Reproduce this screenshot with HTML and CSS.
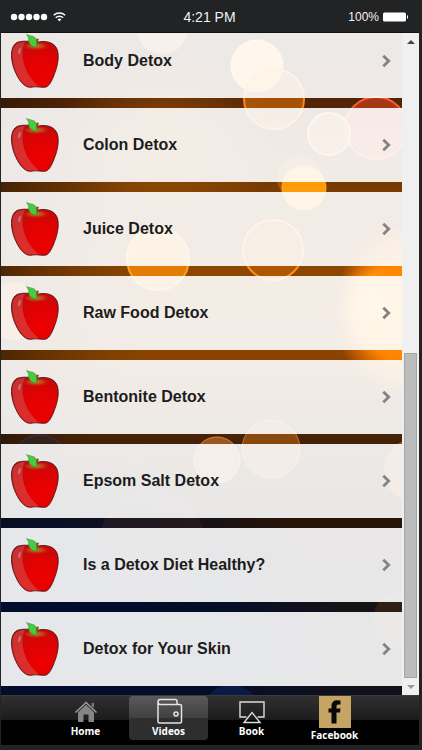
FILE: index.html
```html
<!DOCTYPE html>
<html lang="en">
<head>
    <meta charset="UTF-8">
    <meta name="viewport" content="width=device-width, initial-scale=1.0">
    <title>Detox Videos</title>
    <link rel="stylesheet" href="styles.css">
</head>
<body>
    <!-- shared icons -->
    <svg class="defs" width="0" height="0" aria-hidden="true">
        <defs>
            <radialGradient id="skin" cx="0.65" cy="0.7" r="0.75">
                <stop offset="0" stop-color="#ee0000"/>
                <stop offset="0.6" stop-color="#dc0303"/>
                <stop offset="1" stop-color="#b80c0c"/>
            </radialGradient>
            <radialGradient id="dimple">
                <stop offset="0" stop-color="#b9822c"/>
                <stop offset="0.5" stop-color="#c0501c" stop-opacity="0.8"/>
                <stop offset="1" stop-color="#d01008" stop-opacity="0"/>
            </radialGradient>
        </defs>
        <symbol id="apple" viewBox="0 0 48 54">
            <path d="M25 8.500C20 7 11 6.500 6 8.500C1.500 11 0 17 .6 24C1.200 31 3.500 37 6.500 42.500C9 47 13 52.500 18 53.200C21 53.500 22 52.800 25 52.800C28 52.800 31 53.700 34.500 53.200C39 52.300 42 44 44 38.500C46.500 32 48 24 46.800 18C45.500 9 36 5.500 25 8.500Z" fill="url(#skin)" stroke="#4a0a0a" stroke-width=".8"/>
            <path d="M14 8C10.500 14 11 25 14 33C17 41.500 22 48 28 52.300C24 52 21 53 18 52.500C13.500 51.700 9.500 46.500 7 42C3.500 36 1.700 29 1.300 22C1 14 4 8 14 8Z" fill="#d86464" opacity=".45"/>
            <ellipse cx="25" cy="12" rx="14" ry="4.500" fill="url(#dimple)"/>
            <ellipse cx="8.500" cy="17" rx="1" ry="3.200" fill="#f4a0a0" opacity=".6" transform="rotate(12 8 17)"/>
            <path d="M24 12C24 8 25 6 25.800 4.500L28 5C26.800 7.500 26.300 9 26 12Z" fill="#8a4a18"/>
            <path d="M15.500 .5C18.500 2.200 23.500 1.500 25 5C26.200 8 25 10 26 13.200C21.500 12.700 18 10.500 17.800 7C17.800 4.500 17.200 2.500 15.500 .5Z" fill="#45cc40" stroke="#2a8a28" stroke-width=".5"/>
        </symbol>
        <symbol id="chevron" viewBox="0 0 10 14">
            <path d="M1.300 1.800L6.700 7L1.300 12.200" fill="none" stroke="#858281" stroke-width="2.800"/>
        </symbol>
    </svg>

    <div class="phone">
        <header class="status">
            <div class="status-left">
                <svg width="56" height="12" viewBox="0 0 56 12" role="img" aria-label="Signal">
                    <g fill="#fff">
                        <circle cx="4" cy="6" r="3.200"/>
                        <circle cx="11.500" cy="6" r="3.200"/>
                        <circle cx="19" cy="6" r="3.200"/>
                        <circle cx="26.500" cy="6" r="3.200"/>
                        <circle cx="34" cy="6" r="3.200"/>
                        <path d="M47.500 8.300L49.400 10.500L51.300 8.300A2.800 2.800 0 0 0 47.500 8.300Z"/>
                    </g>
                    <g fill="none" stroke="#fff" stroke-width="1.400">
                        <path d="M43.600 4.300A8.500 8.500 0 0 1 55.200 4.300"/>
                        <path d="M45.700 6.700A5.300 5.300 0 0 1 53.100 6.700"/>
                    </g>
                </svg>
            </div>
            <div class="status-time">4:21 PM</div>
            <div class="status-right">
                <span>100%</span>
                <svg width="26" height="10" viewBox="0 0 26 10" role="img" aria-label="Battery full">
                    <rect x="0" y="0.500" width="23" height="9" rx="1.500" fill="#fff"/>
                    <path d="M24 3C25.500 3.500 25.500 6.500 24 7Z" fill="#fff"/>
                </svg>
            </div>
        </header>

        <main class="content">
            <svg class="bokeh" viewBox="0 0 418 662" preserveAspectRatio="none" aria-hidden="true">
                <defs>
                    <linearGradient id="night" x1="0" y1="0" x2="0" y2="1">
                        <stop offset="0" stop-color="#4a1e08"/>
                        <stop offset="0.11" stop-color="#542407"/>
                        <stop offset="0.24" stop-color="#7a3c02"/>
                        <stop offset="0.36" stop-color="#8c4600"/>
                        <stop offset="0.49" stop-color="#8a4300"/>
                        <stop offset="0.61" stop-color="#452208"/>
                        <stop offset="0.74" stop-color="#251408"/>
                        <stop offset="0.86" stop-color="#171216"/>
                        <stop offset="1" stop-color="#10101c"/>
                    </linearGradient>
                    <linearGradient id="shade" x1="0" y1="0" x2="1" y2="0">
                        <stop offset="0" stop-color="#231206" stop-opacity="0.6"/>
                        <stop offset="0.35" stop-color="#5a3000" stop-opacity="0"/>
                    </linearGradient>
                    <radialGradient id="blue">
                        <stop offset="0" stop-color="#000d30"/>
                        <stop offset="0.6" stop-color="#000d2c" stop-opacity="0.85"/>
                        <stop offset="1" stop-color="#000d2c" stop-opacity="0"/>
                    </radialGradient>
                    <radialGradient id="lamp">
                        <stop offset="0" stop-color="#ff9a10"/>
                        <stop offset="0.6" stop-color="#ff8200"/>
                        <stop offset="1" stop-color="#ff7800" stop-opacity="0"/>
                    </radialGradient>
                    <radialGradient id="core">
                        <stop offset="0" stop-color="#ffd040"/>
                        <stop offset="0.6" stop-color="#ffb820" stop-opacity="0.6"/>
                        <stop offset="1" stop-color="#ff9000" stop-opacity="0"/>
                    </radialGradient>
                    <radialGradient id="glow">
                        <stop offset="0" stop-color="#a85a00" stop-opacity="0.7"/>
                        <stop offset="1" stop-color="#a85a00" stop-opacity="0"/>
                    </radialGradient>
                </defs>
                <rect width="418" height="662" fill="url(#night)"/>
                <rect width="418" height="662" fill="url(#shade)"/>
                <ellipse cx="165" cy="110" rx="110" ry="90" fill="url(#glow)"/>
                <ellipse cx="40" cy="610" rx="310" ry="190" fill="url(#blue)"/>
                <ellipse cx="402" cy="278" rx="70" ry="85" fill="url(#lamp)"/>
                <ellipse cx="370" cy="274" rx="32" ry="48" fill="url(#core)" opacity=".7"/>
                <circle cx="161" cy="-5" r="26" fill="#ff9a40" opacity=".6"/>
                <circle cx="256" cy="33" r="26" fill="#ffa838" stroke="#ffc050"/>
                <circle cx="273" cy="66" r="30" fill="#e87808" fill-opacity=".55" stroke="#ff8420" stroke-width="2"/>
                <circle cx="375" cy="95" r="31" fill="#d8481c" fill-opacity=".6" stroke="#ff5a30" stroke-width="2"/>
                <circle cx="328" cy="101" r="21" fill="#e88838" fill-opacity=".6" stroke="#ffa850" stroke-width="2"/>
                <circle cx="298" cy="145" r="22" fill="#d86a08" fill-opacity=".5"/>
                <circle cx="303" cy="155" r="22" fill="#ff9b08" stroke="#ffae20"/>
                <circle cx="272" cy="217" r="30" fill="#e07000" fill-opacity=".4" stroke="#ff9020" stroke-width="2"/>
                <circle cx="157" cy="226" r="31" fill="#f58608" fill-opacity=".85" stroke="#ffa020" stroke-width="2"/>
                <circle cx="12" cy="278" r="29" fill="#f08820" fill-opacity=".65"/>
                <circle cx="216" cy="427" r="23" fill="#c06c28" fill-opacity=".7" stroke="#d88840"/>
                <circle cx="270" cy="416" r="29" fill="#b86414" fill-opacity=".6" stroke="#c87828"/>
                <circle cx="39" cy="430" r="28" fill="#28283a" fill-opacity=".4" stroke="#34344a"/>
                <circle cx="415" cy="437" r="32" fill="#e87810" fill-opacity=".5"/>
                <circle cx="151" cy="510" r="53" fill="#5a3828" fill-opacity=".22"/>
                <circle cx="402" cy="587" r="30" fill="#6a4018" fill-opacity=".3"/>
                <circle cx="230" cy="682" r="30" fill="#123070" fill-opacity=".4"/>
            </svg>

            <nav class="videos" aria-label="Detox videos">
                <a class="video" href="#body">
                    <svg class="apple"><use href="#apple"/></svg>
                    <span class="title">Body Detox</span>
                    <svg class="chevron"><use href="#chevron"/></svg>
                </a>
                <a class="video" href="#colon">
                    <svg class="apple"><use href="#apple"/></svg>
                    <span class="title">Colon Detox</span>
                    <svg class="chevron"><use href="#chevron"/></svg>
                </a>
                <a class="video" href="#juice">
                    <svg class="apple"><use href="#apple"/></svg>
                    <span class="title">Juice Detox</span>
                    <svg class="chevron"><use href="#chevron"/></svg>
                </a>
                <a class="video" href="#raw-food">
                    <svg class="apple"><use href="#apple"/></svg>
                    <span class="title">Raw Food Detox</span>
                    <svg class="chevron"><use href="#chevron"/></svg>
                </a>
                <a class="video" href="#bentonite">
                    <svg class="apple"><use href="#apple"/></svg>
                    <span class="title">Bentonite Detox</span>
                    <svg class="chevron"><use href="#chevron"/></svg>
                </a>
                <a class="video" href="#epsom-salt">
                    <svg class="apple"><use href="#apple"/></svg>
                    <span class="title">Epsom Salt Detox</span>
                    <svg class="chevron"><use href="#chevron"/></svg>
                </a>
                <a class="video" href="#healthy">
                    <svg class="apple"><use href="#apple"/></svg>
                    <span class="title">Is a Detox Diet Healthy?</span>
                    <svg class="chevron"><use href="#chevron"/></svg>
                </a>
                <a class="video" href="#for-skin">
                    <svg class="apple"><use href="#apple"/></svg>
                    <span class="title">Detox for Your Skin</span>
                    <svg class="chevron"><use href="#chevron"/></svg>
                </a>
            </nav>

            <div class="scrollbar">
                <button class="scroll-btn" type="button" aria-label="Scroll up">
                    <svg width="8" height="4" viewBox="0 0 8 4"><path d="M0 4L4 0L8 4Z" fill="#444"/></svg>
                </button>
                <div class="scroll-space"></div>
                <div class="scroll-thumb"></div>
                <button class="scroll-btn" type="button" aria-label="Scroll down">
                    <svg width="8" height="4" viewBox="0 0 8 4"><path d="M0 0L4 4L8 0Z" fill="#999"/></svg>
                </button>
            </div>
        </main>

        <nav class="tabs" aria-label="Main">
            <a class="tab" href="#home">
                <svg width="24" height="24" viewBox="0 0 24 24">
                    <path d="M1.500 12.500L12 2.500L22.500 12.500" fill="none" stroke="#999" stroke-width="1.600"/>
                    <path d="M4 12.300L12 4.800L20 12.300V22H14.500V14.500H9.500V22H4Z" fill="#858585"/>
                    <path d="M17.500 3H20V8L17.500 5.700Z" fill="#777"/>
                </svg>
                <span>Home</span>
            </a>
            <a class="tab active" href="#videos" aria-current="page">
                <svg width="28" height="28" viewBox="0 0 28 28" fill="none" stroke="#e4e4e4" stroke-width="1.500">
                    <path d="M3 6V25.500Q3 27 4.500 27H25Q26.500 27 26.500 25.500V10Q26.500 8.500 25 8.500H5.500Q3 8.500 3 6Q3 3.500 5.500 3.500H20Q22 3.500 22 5.500V8.500"/>
                    <circle cx="21" cy="18" r="2"/>
                </svg>
                <span>Videos</span>
            </a>
            <a class="tab" href="#book">
                <svg width="26" height="24" viewBox="0 0 26 24" fill="none" stroke="#ddd" stroke-width="1.400">
                    <path d="M7.500 17H1V2H25V17H18.500"/>
                    <path d="M13 12.500L21 22.500H5Z"/>
                </svg>
                <span>Book</span>
            </a>
            <a class="tab facebook" href="#facebook">
                <svg width="32" height="32" viewBox="0 0 32 32">
                    <rect width="32" height="32" fill="#c5a466"/>
                    <path d="M21.500 4.500V8.500H19.500C18 8.500 17.500 9.200 17.500 10.500V12.500H21.500L21 16.500H17.500V27.500H12.500V16.500H9.500V12.500H12.500V10C12.500 6.200 14.800 4.300 18.200 4.300Z" fill="#0a0806"/>
                </svg>
                <span>Facebook</span>
            </a>
        </nav>
    </div>
</body>
</html>
```
FILE: styles.css
```css
* {
    box-sizing: border-box;
}
body {
    margin: 0;
    background: #222324;
    font-family: "Liberation Sans", Arial, sans-serif;
}
.defs {
    position: absolute;
}
.phone {
    display: flex;
    flex-direction: column;
    height: 100vh;
    padding: 0 3px 5px 1px;
    background: #222324;
}
a {
    color: inherit;
    text-decoration: none;
}

/* status bar */
.status {
    display: grid;
    grid-template-columns: 1fr auto 1fr;
    align-items: center;
    height: 33px;
    padding: 2px 10px 0 9px;
    border-bottom: 1px solid #111;
    color: #f2f2f2;
    flex: none;
}
.status-left {
    display: flex;
}
.status-time {
    font-size: 14px;
}
.status-right {
    display: flex;
    align-items: center;
    justify-content: flex-end;
    gap: 4px;
    font-size: 12px;
}

/* video list */
.content {
    position: relative;
    display: flex;
    flex: 1;
    min-height: 0;
    overflow: hidden;
}
.bokeh {
    position: absolute;
    top: 0;
    left: 0;
    width: 100%;
    height: 100%;
}
.videos {
    position: relative;
    display: flex;
    flex: 1;
    flex-direction: column;
    justify-content: flex-end;
    gap: 10px;
    padding-bottom: 9px;
}
.video {
    display: flex;
    flex: none;
    align-items: center;
    height: 74px;
    padding: 0 10px;
    background: rgba(255, 255, 255, 0.9);
    color: #1c1c1c;
    font-size: 16px;
    font-weight: bold;
}
.apple {
    width: 48px;
    height: 54px;
    flex: none;
}
.title {
    flex: 1;
    padding-left: 24px;
}
.chevron {
    width: 10px;
    height: 14px;
    flex: none;
}

/* scrollbar */
.scrollbar {
    position: relative;
    display: flex;
    flex-direction: column;
    width: 17px;
    padding: 0 2px;
    background: #f0f0f0;
}
.scroll-btn {
    display: flex;
    align-items: center;
    justify-content: center;
    height: 17px;
    padding: 0;
    border: none;
    background: none;
}
.scroll-space {
    flex: 15;
}
.scroll-thumb {
    flex: 16;
    border: 1px solid #a6a6a6;
    background: #bcbcbc;
}

/* bottom tabs */
.tabs {
    display: flex;
    justify-content: center;
    gap: 4px;
    flex: none;
    height: 50px;
    border-top: 1px solid #3a3a3a;
    background: linear-gradient(#303030, #1b1b1b 50%, #000 50%);
}
.tab {
    display: flex;
    flex: 0 1 79px;
    flex-direction: column;
    align-items: center;
    justify-content: flex-end;
    height: 44px;
    padding-bottom: 2px;
    border-radius: 4px;
    color: #fff;
    font-family: "Open Sans", sans-serif;
    font-size: 10px;
    font-weight: bold;
    line-height: 14px;
}
.tab svg {
    flex: none;
}
.active {
    background: linear-gradient(#5a5a5a, #404040 50%, #2e2e2e 50%);
}
.facebook {
    height: 48px;
}
```
